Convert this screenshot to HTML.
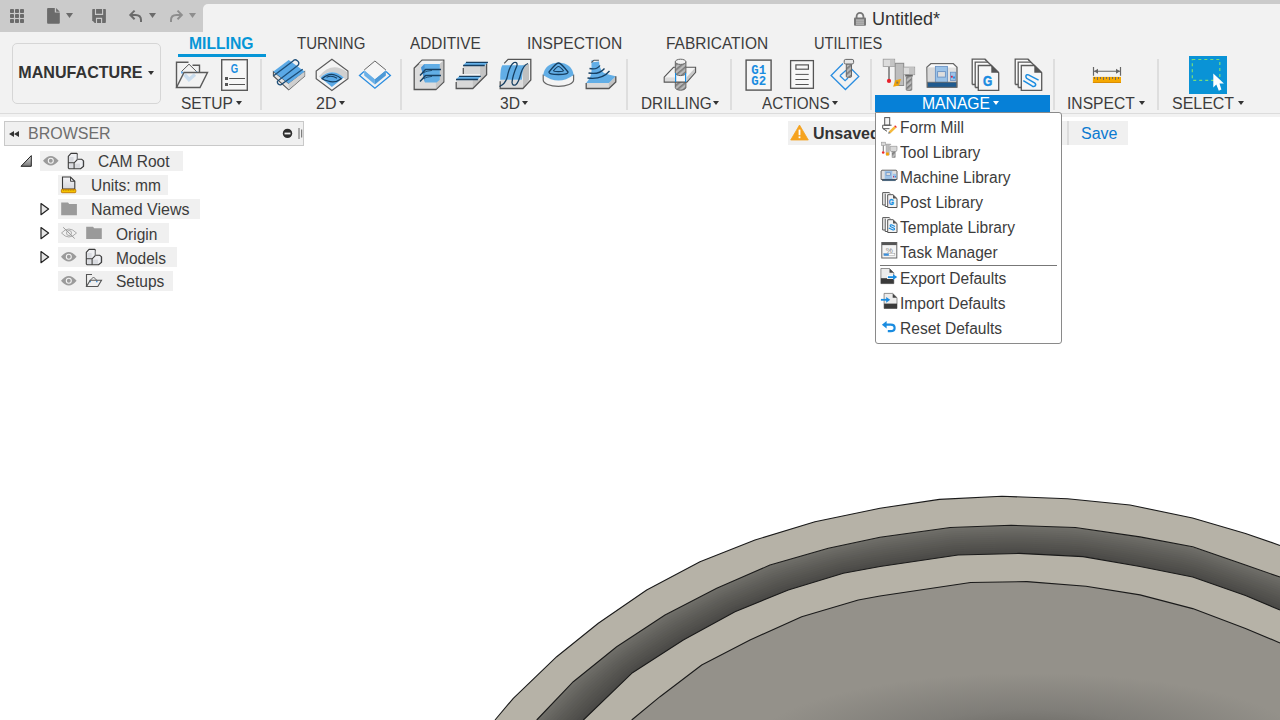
<!DOCTYPE html>
<html><head><meta charset="utf-8">
<style>
*{margin:0;padding:0;box-sizing:border-box}
html,body{width:1280px;height:720px;overflow:hidden;background:#fff;font-family:"Liberation Sans",sans-serif;color:#3c3c3c}
.a{position:absolute}
.t{position:absolute;white-space:nowrap;line-height:1}
svg{position:absolute;overflow:visible}
.tri{position:absolute;width:0;height:0;border-left:3px solid transparent;border-right:3px solid transparent;border-top:4px solid #333}
.sep{position:absolute;top:59px;width:2px;height:51px;background:#dedede}
.lbl{font-size:16px;color:#3c3c3c}
.tab{font-size:16px;color:#3c3c3c}
.row{position:absolute;height:20px;background:#f0f0f0}
.rt{position:absolute;font-size:16.5px;color:#3c3c3c;white-space:nowrap;line-height:1;transform:scaleX(0.94);transform-origin:0 0}
.mi{position:absolute;left:900px;font-size:16px;color:#3c3c3c;white-space:nowrap;line-height:1;transform:scaleX(0.972);transform-origin:0 0}
</style></head><body>

<!-- 3D model -->
<svg style="left:0;top:0" width="1280" height="720">
<defs><radialGradient id="floor" gradientUnits="userSpaceOnUse" cx="0" cy="0" r="1" gradientTransform="translate(1030 748) scale(280 75)"><stop offset="0" stop-color="#5e5c57"/><stop offset="0.5" stop-color="#7f7d78"/><stop offset="1" stop-color="#94918a"/></radialGradient>
<clipPath id="wallclip"><path d="M536.7 720.0 L573.3 681.7 L616.7 646.7 L665.0 615.0 L716.7 588.3 L770.0 565.0 L828.3 548.3 L880.0 537.2 L950.3 527.5 L1011.2 525.3 L1075.3 527.5 L1140.0 536.9 L1192.7 546.7 L1245.5 565.1 L1280.0 577.0 L1280 720 Z"/></clipPath></defs>
<path d="M495.0 720.0 L513.3 698.3 L556.7 656.7 L598.3 623.3 L646.7 590.0 L700.0 561.7 L755.0 540.0 L815.0 521.7 L880.0 508.3 L939.4 499.4 L1001.9 496.2 L1067.5 498.8 L1130.0 505.0 L1192.5 518.0 L1245.5 533.5 L1280.0 545.4 L1280 720 Z" fill="#b6b2a7"/>
<g clip-path="url(#wallclip)"><path d="M430.0 831.7 L446.3 814.6 L462.0 798.1 L477.3 782.1 L492.2 766.5 L506.7 751.4 L520.9 736.5 L534.9 721.9 L548.5 707.6 L562.0 693.5 L575.7 679.8 L590.9 667.5 L605.9 655.4 L621.0 643.9 L636.9 633.4 L652.6 623.1 L668.3 613.3 L684.9 604.7 L701.2 596.3 L717.3 588.0 L733.9 580.8 L750.3 573.6 L766.5 566.5 L783.5 561.1 L800.4 556.3 L817.2 551.5 L834.0 547.1 L850.9 543.4 L867.6 539.9 L884.4 536.6 L901.2 534.3 L918.0 532.0 L934.7 529.7 L951.3 527.5 L968.1 526.9 L984.9 526.3 L1001.6 525.6 L1018.4 525.5 L1035.1 526.1 L1051.9 526.7 L1068.7 527.3 L1085.5 529.0 L1102.1 531.4 L1118.9 533.8 L1135.7 536.3 L1152.6 539.2 L1169.5 542.4 L1186.6 545.6 L1203.3 550.4 L1219.7 556.1 L1236.2 561.9 L1252.9 567.6 L1269.8 573.5 L1287.0 579.4 L1304.5 585.5 L1322.4 591.6 L1340.7 597.9 L1359.5 604.4 L1378.8 611.1 L1400 760 L400 760 Z" fill="#706f69"/><path d="M432.0 832.3 L448.3 815.3 L464.1 798.9 L479.4 783.0 L494.3 767.5 L508.8 752.4 L523.0 737.6 L536.9 723.1 L550.6 708.9 L564.1 694.9 L577.7 681.2 L592.7 669.0 L607.5 656.9 L622.6 645.4 L638.5 635.0 L654.1 624.8 L669.8 615.0 L686.3 606.4 L702.5 598.0 L718.5 589.8 L735.1 582.6 L751.4 575.4 L767.5 568.4 L784.4 563.0 L801.3 558.2 L818.0 553.4 L834.7 548.9 L851.6 545.4 L868.2 541.8 L884.9 538.6 L901.7 536.3 L918.4 534.0 L935.0 531.7 L951.6 529.5 L968.3 528.8 L985.0 528.3 L1001.7 527.7 L1018.3 527.5 L1035.0 528.1 L1051.7 528.7 L1068.5 529.3 L1085.1 530.9 L1101.7 533.4 L1118.4 535.8 L1135.2 538.3 L1151.9 541.2 L1168.8 544.4 L1185.8 547.6 L1202.4 552.3 L1218.8 558.0 L1235.2 563.7 L1251.9 569.5 L1268.7 575.3 L1285.8 581.3 L1303.2 587.4 L1320.9 593.6 L1339.1 599.9 L1357.7 606.5 L1376.9 613.2 L1400 760 L400 760 Z" fill="#6c6b66"/><path d="M434.1 832.9 L450.4 816.0 L466.2 799.7 L481.5 783.8 L496.4 768.4 L510.9 753.4 L525.1 738.7 L539.0 724.4 L552.6 710.2 L566.1 696.3 L579.7 682.7 L594.6 670.4 L609.2 658.3 L624.3 646.9 L640.1 636.6 L655.7 626.4 L671.3 616.6 L687.7 608.1 L703.8 599.7 L719.7 591.5 L736.2 584.3 L752.5 577.3 L768.6 570.3 L785.4 564.9 L802.2 560.0 L818.8 555.2 L835.4 550.8 L852.2 547.3 L868.8 543.8 L885.5 540.6 L902.2 538.3 L918.8 536.0 L935.3 533.7 L951.8 531.5 L968.5 530.8 L985.1 530.3 L1001.7 529.7 L1018.3 529.5 L1034.9 530.1 L1051.5 530.7 L1068.2 531.3 L1084.8 532.9 L1101.4 535.3 L1117.9 537.8 L1134.6 540.3 L1151.3 543.2 L1168.1 546.4 L1185.0 549.6 L1201.6 554.2 L1217.9 559.8 L1234.3 565.5 L1250.8 571.3 L1267.6 577.2 L1284.5 583.2 L1301.8 589.3 L1319.4 595.5 L1337.4 601.9 L1355.9 608.5 L1374.9 615.2 L1400 760 L400 760 Z" fill="#696863"/><path d="M436.1 833.5 L452.5 816.7 L468.3 800.4 L483.6 784.7 L498.5 769.4 L513.0 754.4 L527.2 739.9 L541.0 725.6 L554.7 711.5 L568.2 697.7 L581.7 684.2 L596.4 671.9 L610.9 659.7 L626.0 648.5 L641.7 638.2 L657.2 628.0 L672.8 618.3 L689.1 609.8 L705.1 601.4 L721.0 593.2 L737.4 586.1 L753.6 579.1 L769.7 572.2 L786.4 566.8 L803.1 561.9 L819.6 557.1 L836.2 552.7 L852.9 549.2 L869.5 545.7 L886.0 542.6 L902.6 540.3 L919.2 538.0 L935.6 535.7 L952.1 533.5 L968.7 532.8 L985.2 532.3 L1001.7 531.7 L1018.3 531.5 L1034.8 532.1 L1051.3 532.7 L1067.9 533.4 L1084.5 534.9 L1101.0 537.3 L1117.5 539.8 L1134.1 542.3 L1150.7 545.2 L1167.4 548.4 L1184.3 551.6 L1200.8 556.0 L1217.0 561.7 L1233.3 567.4 L1249.8 573.1 L1266.5 579.0 L1283.3 585.0 L1300.4 591.2 L1317.9 597.5 L1335.8 603.9 L1354.1 610.5 L1373.0 617.3 L1400 760 L400 760 Z" fill="#666560"/><path d="M438.2 834.1 L454.6 817.4 L470.4 801.2 L485.7 785.5 L500.6 770.3 L515.1 755.5 L529.2 741.0 L543.1 726.8 L556.8 712.8 L570.2 699.1 L583.7 685.6 L598.2 673.3 L612.6 661.2 L627.6 650.0 L643.3 639.7 L658.8 629.6 L674.3 620.0 L690.5 611.5 L706.4 603.1 L722.2 594.9 L738.5 587.9 L754.7 580.9 L770.7 574.1 L787.3 568.6 L804.0 563.8 L820.5 559.0 L836.9 554.5 L853.6 551.1 L870.1 547.7 L886.5 544.6 L903.1 542.3 L919.6 540.0 L935.9 537.7 L952.3 535.5 L968.8 534.8 L985.3 534.3 L1001.8 533.7 L1018.2 533.5 L1034.7 534.1 L1051.2 534.8 L1067.7 535.4 L1084.2 536.8 L1100.6 539.3 L1117.0 541.8 L1133.5 544.3 L1150.1 547.2 L1166.7 550.4 L1183.5 553.6 L1200.0 557.9 L1216.1 563.5 L1232.4 569.2 L1248.8 574.9 L1265.4 580.8 L1282.1 586.9 L1299.1 593.1 L1316.4 599.5 L1334.1 605.9 L1352.3 612.5 L1371.0 619.4 L1400 760 L400 760 Z" fill="#63625d"/><path d="M440.3 834.7 L456.6 818.0 L472.5 802.0 L487.8 786.4 L502.6 771.2 L517.1 756.5 L531.3 742.1 L545.2 728.0 L558.8 714.1 L572.2 700.5 L585.7 687.1 L600.1 674.8 L614.3 662.6 L629.3 651.5 L644.9 641.3 L660.3 631.3 L675.8 621.7 L691.9 613.2 L707.7 604.8 L723.4 596.6 L739.7 589.6 L755.8 582.7 L771.8 575.9 L788.3 570.5 L804.9 565.7 L821.3 560.9 L837.6 556.4 L854.2 553.0 L870.7 549.6 L887.1 546.6 L903.6 544.3 L919.9 542.0 L936.3 539.7 L952.6 537.5 L969.0 536.8 L985.4 536.3 L1001.8 535.7 L1018.2 535.5 L1034.6 536.1 L1051.0 536.8 L1067.4 537.4 L1083.9 538.8 L1100.2 541.2 L1116.6 543.8 L1133.0 546.3 L1149.5 549.2 L1166.0 552.4 L1182.7 555.6 L1199.2 559.8 L1215.3 565.4 L1231.4 571.0 L1247.8 576.7 L1264.2 582.7 L1280.8 588.8 L1297.7 595.0 L1314.9 601.4 L1332.5 607.9 L1350.5 614.6 L1369.0 621.4 L1400 760 L400 760 Z" fill="#605f5b"/><path d="M442.3 835.3 L458.7 818.7 L474.5 802.7 L489.9 787.2 L504.7 772.2 L519.2 757.5 L533.4 743.2 L547.2 729.2 L560.9 715.4 L574.3 701.8 L587.7 688.6 L601.9 676.2 L615.9 664.0 L631.0 653.0 L646.5 642.9 L661.8 632.9 L677.2 623.4 L693.2 614.9 L709.0 606.6 L724.6 598.3 L740.9 591.4 L756.9 584.6 L772.8 577.8 L789.3 572.4 L805.8 567.5 L822.1 562.8 L838.3 558.2 L854.9 554.9 L871.3 551.6 L887.6 548.7 L904.0 546.3 L920.3 544.0 L936.6 541.7 L952.8 539.5 L969.2 538.8 L985.5 538.3 L1001.8 537.7 L1018.2 537.5 L1034.5 538.1 L1050.8 538.8 L1067.2 539.5 L1083.6 540.8 L1099.8 543.2 L1116.1 545.8 L1132.4 548.3 L1148.8 551.3 L1165.3 554.4 L1181.9 557.6 L1198.4 561.7 L1214.4 567.3 L1230.5 572.9 L1246.8 578.5 L1263.1 584.5 L1279.6 590.7 L1296.4 597.0 L1313.4 603.4 L1330.9 609.9 L1348.7 616.6 L1367.1 623.5 L1400 760 L400 760 Z" fill="#5d5c58"/><path d="M444.4 835.9 L460.8 819.4 L476.6 803.5 L491.9 788.1 L506.8 773.1 L521.3 758.6 L535.5 744.3 L549.3 730.4 L562.9 716.7 L576.3 703.2 L589.7 690.1 L603.7 677.7 L617.6 665.5 L632.6 654.5 L648.1 644.5 L663.4 634.5 L678.7 625.0 L694.6 616.6 L710.3 608.3 L725.8 600.0 L742.0 593.2 L758.0 586.4 L773.9 579.7 L790.2 574.3 L806.6 569.4 L822.9 564.6 L839.1 560.1 L855.5 556.8 L871.9 553.5 L888.2 550.7 L904.5 548.3 L920.7 546.0 L936.9 543.7 L953.1 541.5 L969.4 540.8 L985.6 540.3 L1001.9 539.7 L1018.1 539.5 L1034.4 540.1 L1050.6 540.8 L1066.9 541.5 L1083.3 542.7 L1099.4 545.2 L1115.6 547.8 L1131.9 550.4 L1148.2 553.3 L1164.6 556.4 L1181.1 559.6 L1197.6 563.6 L1213.5 569.1 L1229.5 574.7 L1245.7 580.4 L1262.0 586.3 L1278.4 592.5 L1295.0 598.9 L1311.9 605.3 L1329.2 611.9 L1346.9 618.6 L1365.1 625.6 L1400 760 L400 760 Z" fill="#5b5a55"/><path d="M446.5 836.5 L462.9 820.1 L478.7 804.3 L494.0 788.9 L508.9 774.1 L523.4 759.6 L537.5 745.4 L551.4 731.6 L565.0 718.0 L578.3 704.6 L591.7 691.5 L605.6 679.1 L619.3 666.9 L634.3 656.1 L649.7 646.0 L664.9 636.1 L680.2 626.7 L696.0 618.3 L711.6 610.0 L727.1 601.8 L743.2 594.9 L759.2 588.2 L774.9 581.6 L791.2 576.1 L807.5 571.3 L823.7 566.5 L839.8 562.0 L856.2 558.7 L872.5 555.5 L888.7 552.7 L905.0 550.3 L921.1 548.0 L937.2 545.7 L953.3 543.5 L969.5 542.7 L985.7 542.3 L1001.9 541.8 L1018.1 541.5 L1034.3 542.1 L1050.4 542.8 L1066.7 543.5 L1082.9 544.7 L1099.0 547.2 L1115.2 549.8 L1131.4 552.4 L1147.6 555.3 L1163.9 558.4 L1180.4 561.6 L1196.8 565.5 L1212.6 571.0 L1228.6 576.6 L1244.7 582.2 L1260.9 588.2 L1277.1 594.4 L1293.6 600.8 L1310.4 607.3 L1327.6 613.9 L1345.1 620.7 L1363.2 627.6 L1400 760 L400 760 Z" fill="#585753"/><path d="M448.5 837.1 L464.9 820.8 L480.8 805.0 L496.1 789.8 L511.0 775.0 L525.5 760.6 L539.6 746.6 L553.4 732.8 L567.0 719.3 L580.4 706.0 L593.7 693.0 L607.4 680.6 L621.0 668.3 L635.9 657.6 L651.3 647.6 L666.5 637.8 L681.7 628.4 L697.4 620.0 L712.9 611.7 L728.3 603.5 L744.4 596.7 L760.3 590.0 L776.0 583.5 L792.2 578.0 L808.4 573.2 L824.5 568.4 L840.5 563.8 L856.9 560.6 L873.1 557.4 L889.3 554.7 L905.5 552.4 L921.5 550.0 L937.5 547.7 L953.6 545.5 L969.7 544.7 L985.8 544.3 L1001.9 543.8 L1018.1 543.5 L1034.2 544.1 L1050.3 544.8 L1066.4 545.6 L1082.6 546.7 L1098.6 549.1 L1114.7 551.7 L1130.8 554.4 L1147.0 557.3 L1163.2 560.4 L1179.6 563.6 L1195.9 567.4 L1211.7 572.8 L1227.6 578.4 L1243.7 584.0 L1259.8 590.0 L1275.9 596.3 L1292.3 602.7 L1308.9 609.2 L1325.9 615.9 L1343.3 622.7 L1361.2 629.7 L1400 760 L400 760 Z" fill="#555450"/><path d="M450.6 837.7 L467.0 821.5 L482.9 805.8 L498.2 790.6 L513.1 775.9 L527.6 761.6 L541.7 747.7 L555.5 734.0 L569.1 720.6 L582.4 707.4 L595.7 694.5 L609.2 682.1 L622.7 669.8 L637.6 659.1 L652.9 649.2 L668.0 639.4 L683.2 630.1 L698.8 621.7 L714.2 613.4 L729.5 605.2 L745.5 598.5 L761.4 591.9 L777.1 585.3 L793.1 579.9 L809.3 575.0 L825.3 570.3 L841.2 565.7 L857.5 562.5 L873.7 559.4 L889.8 556.7 L905.9 554.4 L921.9 552.1 L937.9 549.7 L953.8 547.5 L969.9 546.7 L986.0 546.3 L1002.0 545.8 L1018.0 545.5 L1034.1 546.1 L1050.1 546.9 L1066.2 547.6 L1082.3 548.6 L1098.3 551.1 L1114.2 553.7 L1130.3 556.4 L1146.4 559.3 L1162.5 562.4 L1178.8 565.6 L1195.1 569.3 L1210.9 574.7 L1226.7 580.2 L1242.7 585.8 L1258.7 591.8 L1274.7 598.2 L1290.9 604.6 L1307.4 611.2 L1324.3 617.9 L1341.6 624.7 L1359.2 631.8 L1400 760 L400 760 Z" fill="#53524e"/><path d="M452.7 838.3 L469.1 822.1 L485.0 806.6 L500.3 791.5 L515.2 776.9 L529.6 762.7 L543.8 748.8 L557.6 735.2 L571.1 721.9 L584.4 708.8 L597.7 695.9 L611.1 683.5 L624.4 671.2 L639.3 660.6 L654.5 650.7 L669.5 641.0 L684.7 631.8 L700.2 623.4 L715.5 615.1 L730.7 606.9 L746.7 600.2 L762.5 593.7 L778.1 587.2 L794.1 581.7 L810.2 576.9 L826.1 572.1 L842.0 567.6 L858.2 564.4 L874.3 561.4 L890.4 558.7 L906.4 556.4 L922.3 554.1 L938.2 551.8 L954.1 549.5 L970.1 548.7 L986.1 548.3 L1002.0 547.8 L1018.0 547.5 L1033.9 548.1 L1049.9 548.9 L1065.9 549.6 L1082.0 550.6 L1097.9 553.1 L1113.8 555.7 L1129.7 558.4 L1145.7 561.3 L1161.8 564.4 L1178.0 567.6 L1194.3 571.2 L1210.0 576.6 L1225.7 582.1 L1241.7 587.6 L1257.5 593.7 L1273.4 600.1 L1289.5 606.5 L1305.9 613.1 L1322.7 619.9 L1339.8 626.8 L1357.3 633.8 L1400 760 L400 760 Z" fill="#504f4c"/><path d="M454.7 838.9 L471.2 822.8 L487.0 807.3 L502.4 792.4 L517.2 777.8 L531.7 763.7 L545.8 749.9 L559.6 736.4 L573.2 723.2 L586.5 710.2 L599.7 697.4 L612.9 685.0 L626.0 672.7 L640.9 662.1 L656.1 652.3 L671.1 642.6 L686.2 633.5 L701.6 625.1 L716.8 616.8 L731.9 608.6 L747.9 602.0 L763.6 595.5 L779.2 589.1 L795.1 583.6 L811.1 578.8 L826.9 574.0 L842.7 569.4 L858.9 566.4 L874.9 563.3 L890.9 560.7 L906.9 558.4 L922.7 556.1 L938.5 553.8 L954.3 551.5 L970.2 550.7 L986.2 550.3 L1002.1 549.8 L1018.0 549.4 L1033.8 550.1 L1049.7 550.9 L1065.7 551.6 L1081.7 552.6 L1097.5 555.0 L1113.3 557.7 L1129.2 560.4 L1145.1 563.3 L1161.1 566.4 L1177.3 569.6 L1193.5 573.1 L1209.1 578.4 L1224.8 583.9 L1240.6 589.4 L1256.4 595.5 L1272.2 601.9 L1288.2 608.5 L1304.4 615.1 L1321.0 621.9 L1338.0 628.8 L1355.3 635.9 L1400 760 L400 760 Z" fill="#4d4c49"/><path d="M456.8 839.5 L473.2 823.5 L489.1 808.1 L504.5 793.2 L519.3 778.8 L533.8 764.7 L547.9 751.0 L561.7 737.6 L575.2 724.5 L588.5 711.6 L601.7 698.9 L614.8 686.4 L627.7 674.1 L642.6 663.7 L657.7 653.9 L672.6 644.3 L687.6 635.1 L703.0 626.8 L718.2 618.5 L733.1 610.3 L749.0 603.8 L764.7 597.3 L780.2 591.0 L796.0 585.5 L812.0 580.7 L827.7 575.9 L843.4 571.3 L859.5 568.3 L875.5 565.3 L891.5 562.7 L907.3 560.4 L923.1 558.1 L938.8 555.8 L954.6 553.5 L970.4 552.7 L986.3 552.3 L1002.1 551.8 L1017.9 551.4 L1033.7 552.1 L1049.6 552.9 L1065.4 553.7 L1081.4 554.5 L1097.1 557.0 L1112.8 559.7 L1128.6 562.4 L1144.5 565.3 L1160.4 568.4 L1176.5 571.6 L1192.7 574.9 L1208.2 580.3 L1223.8 585.7 L1239.6 591.3 L1255.3 597.3 L1271.0 603.8 L1286.8 610.4 L1302.9 617.1 L1319.4 623.9 L1336.2 630.8 L1353.4 637.9 L1400 760 L400 760 Z" fill="#4b4a47"/></g>
<path d="M583.3 720.0 L631.7 673.3 L683.3 640.0 L735.0 611.7 L788.3 590.0 L843.3 573.3 L880.0 566.5 L958.0 555.0 L1019.0 553.4 L1083.0 556.6 L1140.0 566.5 L1192.7 577.0 L1245.5 595.5 L1280.0 610.0 L1280 720 Z" fill="#b6b2a7"/>
<path d="M631.7 720.0 L660.0 696.7 L701.7 665.0 L750.0 640.0 L801.7 616.7 L858.3 600.0 L880.0 596.0 L970.6 582.5 L1026.9 581.6 L1086.0 586.2 L1140.0 594.9 L1192.7 608.6 L1245.5 628.4 L1280.0 642.9 L1280 720 Z" fill="url(#floor)"/>
<path d="M495.0 720.0 L513.3 698.3 L556.7 656.7 L598.3 623.3 L646.7 590.0 L700.0 561.7 L755.0 540.0 L815.0 521.7 L880.0 508.3 L939.4 499.4 L1001.9 496.2 L1067.5 498.8 L1130.0 505.0 L1192.5 518.0 L1245.5 533.5 L1280.0 545.4" fill="none" stroke="#1a1a1a" stroke-width="1.1" stroke-linejoin="round"/>
<path d="M536.7 720.0 L573.3 681.7 L616.7 646.7 L665.0 615.0 L716.7 588.3 L770.0 565.0 L828.3 548.3 L880.0 537.2 L950.3 527.5 L1011.2 525.3 L1075.3 527.5 L1140.0 536.9 L1192.7 546.7 L1245.5 565.1 L1280.0 577.0" fill="none" stroke="#1a1a1a" stroke-width="1.1" stroke-linejoin="round"/>
<path d="M583.3 720.0 L631.7 673.3 L683.3 640.0 L735.0 611.7 L788.3 590.0 L843.3 573.3 L880.0 566.5 L958.0 555.0 L1019.0 553.4 L1083.0 556.6 L1140.0 566.5 L1192.7 577.0 L1245.5 595.5 L1280.0 610.0" fill="none" stroke="#1a1a1a" stroke-width="1.1" stroke-linejoin="round"/>
<path d="M631.7 720.0 L660.0 696.7 L701.7 665.0 L750.0 640.0 L801.7 616.7 L858.3 600.0 L880.0 596.0 L970.6 582.5 L1026.9 581.6 L1086.0 586.2 L1140.0 594.9 L1192.7 608.6 L1245.5 628.4 L1280.0 642.9" fill="none" stroke="#1a1a1a" stroke-width="1.1" stroke-linejoin="round"/>
</svg>

<!-- top bar -->
<div class="a" style="left:0;top:0;width:1280px;height:32px;background:#cbcbcb"></div>
<div class="a" style="left:203px;top:4px;width:1077px;height:40px;background:#f2f2f2;border-top-left-radius:5px"></div>
<div class="a" style="left:0;top:32px;width:1280px;height:85px;background:#f2f2f2"></div>
<div class="a" style="left:0;top:113px;width:1280px;height:1px;background:#dcdcdc"></div>

<!-- quick access -->
<svg style="left:0;top:0" width="210" height="32">
  <g fill="#6b6b6b">
    <rect x="10" y="9" width="4" height="4" rx="0.8"/><rect x="15" y="9" width="4" height="4" rx="0.8"/><rect x="20" y="9" width="4" height="4" rx="0.8"/>
    <rect x="10" y="14" width="4" height="4" rx="0.8"/><rect x="15" y="14" width="4" height="4" rx="0.8"/><rect x="20" y="14" width="4" height="4" rx="0.8"/>
    <rect x="10" y="19" width="4" height="4" rx="0.8"/><rect x="15" y="19" width="4" height="4" rx="0.8"/><rect x="20" y="19" width="4" height="4" rx="0.8"/>
    <path d="M47.1 9Q47.1 8.1 48 8.1H54.8V12.5H59.8V22.8Q59.8 23.7 58.9 23.7H48Q47.1 23.7 47.1 22.8Z"/><path d="M56.1 8.1L59.8 11.7H56.1Z"/>
    <path d="M66 13h7l-3.5 5z"/>
    <path d="M92.2 9.8Q92.2 8.9 93.1 8.9H105Q105.9 8.9 105.9 9.8V22Q105.9 22.9 105 22.9H94.7L92.2 20.2Z"/>
    <path d="M149 13h7l-3.5 5z"/>
  </g>
  <path d="M95.5 8.9V14.4H102.6V8.9M96.5 22.9V18.4H101.6V22.9" fill="none" stroke="#cbcbcb" stroke-width="1.1"/>
  <path d="M141 22V20Q141 14.9 135.5 14.9H130.5" stroke="#6b6b6b" stroke-width="2" fill="none"/>
  <path d="M134.6 10.6L130.3 14.9L134.6 19.2" stroke="#6b6b6b" stroke-width="2" fill="none"/>
  <path d="M171 22V20Q171 14.9 176.5 14.9H181.5" stroke="#8e8e8e" stroke-width="2" fill="none"/>
  <path d="M177.5 10.6L181.8 14.9L177.5 19.2" stroke="#8e8e8e" stroke-width="2" fill="none"/>
  <path d="M189 13h7l-3.5 5z" fill="#8e8e8e"/>
</svg>

<!-- title -->
<svg style="left:853px;top:12px" width="14" height="15">
  <path d="M3.6 6.5v-2.3a3.4 3.4 0 0 1 6.8 0v2.3" stroke="#777" stroke-width="1.8" fill="none"/>
  <rect x="1" y="5.6" width="12" height="8.2" rx="1" fill="#777"/>
  <rect x="3" y="7.6" width="8" height="0.9" fill="#e6e6e6"/><rect x="3" y="9.6" width="8" height="0.9" fill="#e6e6e6"/><rect x="3" y="11.6" width="8" height="0.9" fill="#e6e6e6"/>
</svg>
<div class="t" style="left:872px;top:10px;font-size:18px;color:#333">Untitled*</div>

<!-- MANUFACTURE -->
<div class="a" style="left:12px;top:43px;width:149px;height:61px;border:1.5px solid #d6d6d6;border-radius:5px"></div>
<div class="t" style="left:18.3px;top:64px;font-size:16.1px;font-weight:bold;color:#333">MANUFACTURE</div>
<div class="tri" style="left:148px;top:71px"></div>

<!-- tabs -->
<div class="t" style="left:189px;top:36px;font-size:15.7px;font-weight:bold;color:#0696d7">MILLING</div>
<div class="a" style="left:178px;top:54px;width:88px;height:3px;background:#0696d7"></div>
<div class="t tab" style="left:296.7px;top:36px;transform:scaleX(0.9375);transform-origin:0 0">TURNING</div>
<div class="t tab" style="left:409.9px;top:36px;transform:scaleX(0.959);transform-origin:0 0">ADDITIVE</div>
<div class="t tab" style="left:526.9px;top:36px;transform:scaleX(0.974);transform-origin:0 0">INSPECTION</div>
<div class="t tab" style="left:665.8px;top:36px;transform:scaleX(0.968);transform-origin:0 0">FABRICATION</div>
<div class="t tab" style="left:813.9px;top:36px;transform:scaleX(0.914);transform-origin:0 0">UTILITIES</div>

<!-- separators -->
<div class="sep" style="left:260px"></div>
<div class="sep" style="left:400px"></div>
<div class="sep" style="left:626px"></div>
<div class="sep" style="left:730px"></div>
<div class="sep" style="left:870px"></div>
<div class="sep" style="left:1053px"></div>
<div class="sep" style="left:1157px"></div>

<!-- group labels -->
<div class="t lbl" style="left:180.6px;top:96px;transform:scaleX(0.972);transform-origin:0 0">SETUP</div><div class="tri" style="left:235.5px;top:101px"></div>
<div class="t lbl" style="left:316px;top:96px">2D</div><div class="tri" style="left:339px;top:101px"></div>
<div class="t lbl" style="left:499.6px;top:96px;transform:scaleX(0.975);transform-origin:0 0">3D</div><div class="tri" style="left:522px;top:101px"></div>
<div class="t lbl" style="left:641px;top:96px;transform:scaleX(0.958);transform-origin:0 0">DRILLING</div><div class="tri" style="left:713px;top:101px"></div>
<div class="t lbl" style="left:762px;top:96px;transform:scaleX(0.951);transform-origin:0 0">ACTIONS</div><div class="tri" style="left:832px;top:101px"></div>
<div class="a" style="left:875px;top:95px;width:175px;height:17px;background:#0680d7"></div>
<div class="t lbl" style="left:921.9px;top:96px;color:#fff;transform:scaleX(0.981);transform-origin:0 0">MANAGE</div><div class="tri" style="left:993px;top:101px;border-top-color:#fff"></div>
<div class="t lbl" style="left:1067.2px;top:96px;transform:scaleX(0.977);transform-origin:0 0">INSPECT</div><div class="tri" style="left:1139px;top:101px"></div>
<div class="t lbl" style="left:1171.6px;top:96px;transform:scaleX(0.997);transform-origin:0 0">SELECT</div><div class="tri" style="left:1238px;top:101px"></div>

<!-- ICONS -->
<svg style="left:0;top:0" width="1280" height="117">
<defs>
  <pattern id="hatch" patternUnits="userSpaceOnUse" width="4" height="4" patternTransform="rotate(-40)">
    <rect width="4" height="4" fill="#b8b8b8"/><rect width="4" height="1.6" fill="#7a7a7a"/>
  </pattern>
</defs>
<!-- setup folder -->
<g transform="translate(172,56)" fill="none" stroke="#5a5a5a" stroke-width="1.4">
  <path d="M16.5 6.25H4.5V31.5"/>
  <path d="M20.5 9.25H27.5V16.25"/>
  <path d="M9.5 15.5L17 8.2L24.5 15.5" stroke-width="1"/>
  <path d="M12.5 18.5L17 23.5L23 18.5" stroke="#c9dced" stroke-width="3.5"/>
  <path d="M10 15.5V17.5" stroke="#3a8fdc" stroke-width="1.5"/>
  <path d="M24.5 15.5V17" stroke="#3a8fdc" stroke-width="1.5"/>
  <path d="M12 16.5H35.5L28 31.5H4.5Z"/>
</g>
<!-- setup G doc -->
<g transform="translate(216,56)">
  <rect x="5.7" y="3.7" width="25.6" height="30.6" fill="#f6f6f6" stroke="#5a5a5a" stroke-width="1.4"/>
  <text x="14.8" y="17.2" textLength="7.4" lengthAdjust="spacingAndGlyphs" font-family="Liberation Sans" font-weight="bold" font-size="13" fill="#1a8ce0">G</text>
  <rect x="9" y="21" width="3" height="3" fill="#555"/><rect x="9" y="27" width="3" height="3" fill="#555"/>
  <path d="M13.2 22.5H29M13.2 28.5H29" stroke="#555" stroke-width="1"/>
</g>
<!-- 2D adaptive -->
<g transform="translate(270,56)">
  <path d="M3.4 15.6L18.7 27.4L34.6 15.6V20L18.7 33.8L3.4 20Z" fill="#e4e4e4" stroke="#555" stroke-width="1.1"/>
  <path d="M18.7 27.4L34.6 15.6V20L18.7 33.8Z" fill="#cfcfcf"/>
  <path d="M3.4 15.6L18.7 4L34.6 15.6L18.7 27.4Z" fill="#5aa9e6"/>
  <path d="M3.6 19.8L22.7 5.3A3.1 3.1 0 0 1 28 9.3L7.4 25.3A3 3 0 0 0 10.8 28.8L32.7 13.2" fill="none" stroke="#1d4e78" stroke-width="1.3"/>
</g>
<!-- 2D pocket -->
<g transform="translate(312,56)">
  <path d="M19.9 3.2L35.9 15V22.7L19.9 34.6L4.2 22.7V15Z" fill="#f4f4f4" stroke="#5a5a5a" stroke-width="1.2"/>
  <path d="M6.8 20.5Q19.9 4.5 35.3 16.2V22.3L33.5 23.6Q19.9 9.5 8.3 21.6Z" fill="#d0d0d0"/>
  <path d="M8.4 21.6Q19.9 11 31.7 21.6L19.9 30.9Z" fill="#5aa9e6"/>
  <path d="M10 22.7Q17 16.5 23 19Q27 20.5 29.3 22.7Q23 27.5 16 25Q12 24 10 22.7Z" fill="none" stroke="#163f62" stroke-width="1.2"/>
  <path d="M14.5 21.2Q19.5 18.8 25 22.2" fill="none" stroke="#163f62" stroke-width="1.1"/>
</g>
<!-- 2D face -->
<g transform="translate(355,56)">
  <path d="M9 15.6L4.5 19.5L19.9 32.2L35.4 19.5L31 15.6" fill="none" stroke="#2a8de0" stroke-width="1.3"/>
  <path d="M9.2 14L19.9 23V28.5L9.2 19.5Z" fill="#6ab0e8"/>
  <path d="M30.9 14L19.9 23V28.5L30.9 19.5Z" fill="#4d9ad8"/>
  <path d="M19.9 5L30.9 14L19.9 23L9.2 14Z" fill="#f6f6f6"/>
  <path d="M9.2 14L19.9 5L30.9 14" fill="none" stroke="#666" stroke-width="1"/>
</g>
<!-- 3D adaptive -->
<g transform="translate(410,56)">
  <path d="M12.1 4.2H33.8V25.9L25.9 33.5H4.2V12.1Z" fill="#dcdcdc" stroke="#555" stroke-width="1.3"/>
  <path d="M12.1 4.7H33.3L29.8 8H9Z" fill="#f2f2f2"/>
  <path d="M33.3 4.7V25.6L25.9 33H25.9V26.6L29.8 22.8V8Z" fill="#c6c6c6"/>
  <path d="M11.1 11.5L14.5 7.9H29.8V23.8L26.5 26.6H15Z" fill="#62aee6"/>
  <path d="M11.1 11.5L14.5 7.9L15 26.6Z" fill="#4894d4"/>
  <path d="M31 13.5H15.5L10 19.5M31 19.5H15.5L10 25.5" fill="none" stroke="#163f62" stroke-width="1.4" stroke-linejoin="round"/>
  <path d="M12.5 17Q17 14.8 22 14.4M12.5 23Q17 20.8 22 20.4" fill="none" stroke="#163f62" stroke-width="0.8"/>
</g>
<!-- 3D stairs -->
<g transform="translate(452,56)">
  <path d="M11.3 9.5H34.6V18.7L28.2 25V18H11.3Z" fill="#d8d8d8"/>
  <path d="M28.2 9.5H34.6V18.7L28.2 25Z" fill="#c4c4c4"/>
  <path d="M4.2 23.5H28.2L20.8 32.5H4.2Z" fill="#d8d8d8"/>
  <path d="M20.8 23.5H28.2V25L20.8 32.5Z" fill="#c4c4c4"/>
  <path d="M34.6 6V18.7L20.8 32.5H4.2V25.9M11.3 12V18" fill="none" stroke="#555" stroke-width="1.3"/>
  <path d="M14 6.3H35.9L32.7 9.5H11.1Z" fill="#66b2ea"/>
  <path d="M7.1 20.3H28.8L25.9 23.5H4Z" fill="#66b2ea"/>
  <path d="M14 6.3H35.9M11.1 9.5H32.7M7.1 20.3H28.8M4 23.5H25.9" stroke="#163f62" stroke-width="1.3"/>
</g>
<!-- 3D scallop -->
<g transform="translate(496,56)">
  <path d="M12.1 3.4H34.8V24L26.9 32.5H4.2V9.2Z" fill="#f2f2f2"/>
  <path d="M26 9.5Q28 8 33 8V24L26.9 32.5V23.7Z" fill="#c0c0c0"/>
  <path d="M4.2 23.7H26.9V32.5H4.2Z" fill="#dcdcdc"/>
  <path d="M6.3 9.2H30Q26 12 25.9 23.7H4.2Q4.2 12 6.3 9.2Z" fill="#62aee6"/>
  <path d="M8.2 7.4L12.1 3.4H34.8V24L26.9 32.5H4.2V25.3" fill="none" stroke="#555" stroke-width="1.3"/>
  <path d="M3.5 30.5Q9 28 11 22Q13.5 9 18 6.5Q21.5 5.5 21 9.5Q16.5 20 16 26.5Q16.5 30 19.5 29Q22.5 27 25 17Q27.5 9 32 7.5" fill="none" stroke="#163f62" stroke-width="1.3"/>
</g>
<!-- 3D dome -->
<g transform="translate(539,56)">
  <path d="M4.2 19V24A15.2 6.3 0 0 0 34.6 24V19Z" fill="#f4f4f4" stroke="#666" stroke-width="1.2"/>
  <path d="M4.2 19Q6 7.5 19.5 6.6Q33 7.5 34.6 19Q19.5 30 4.2 19Z" fill="#62aee6"/>
  <path d="M19.5 7Q22 7 29 16Q29.5 18.5 19.5 18.5Q9.5 18.5 10 16Q17 7 19.5 7Z" fill="none" stroke="#163f62" stroke-width="1.3"/>
  <path d="M19.5 10.5Q21 10.5 24.5 14.8Q24.5 15.6 19.5 15.6Q14.5 15.6 14.5 14.8Q18 10.5 19.5 10.5Z" fill="none" stroke="#163f62" stroke-width="1.2"/>
</g>
<!-- 3D contour -->
<g transform="translate(582,56)">
  <path d="M4.2 26.9H26.9L33.8 20.3V26L26.9 32.5H4.2Z" fill="#dadada"/>
  <path d="M26.9 26.9L33.8 20.3V26L26.9 32.5Z" fill="#c2c2c2"/>
  <path d="M9.5 4.2H16.9Q17.5 14 22 17Q27 19 33.8 20.3L26.9 26.9H4.2Q9.5 21 9.5 15Z" fill="#62aee6"/>
  <path d="M9.5 6.3L12 4.2H16.9V5.5Q13 6 9.5 6.3Z" fill="#f6f6f6"/>
  <path d="M9.5 6.5L12 4.2H16.9" fill="none" stroke="#555" stroke-width="1.1"/>
  <path d="M4.2 26.9V32.5H26.9L33.8 26V20.3" fill="none" stroke="#555" stroke-width="1.3"/>
  <path d="M7.5 12.5Q15 14 18 9.5M6.5 17Q17 19 22.5 12.5M5.5 22Q20 24 27.5 15" fill="none" stroke="#163f62" stroke-width="1.3"/>
</g>
<!-- drilling -->
<g transform="translate(660,56)">
  <path d="M15.3 25V31.6A5.3 2.6 0 0 0 25.9 31.6V25Z" fill="url(#hatch)" stroke="#666" stroke-width="1"/>
  <path d="M4.2 21.1L13.5 11.3H35.6V16.4L26.9 26.1H4.2Z" fill="#f4f4f4"/>
  <path d="M4.7 21.4H26.6V25.6H4.7Z" fill="#dcdcdc"/>
  <path d="M26.9 21.1L35 12V16.2L26.9 25.6Z" fill="#c8c8c8"/>
  <path d="M15.8 17H25.4V25.6H15.8Z" fill="#f6f6f6"/>
  <path d="M4.2 21.1L13.5 11.3H35.6V16.4L26.9 26.1H4.2Z" fill="none" stroke="#555" stroke-width="1.1"/>
  <path d="M15.3 5.8V17A5.3 2.6 0 0 0 25.9 17V5.8Z" fill="url(#hatch)" stroke="#666" stroke-width="1"/>
  <ellipse cx="20.6" cy="5.8" rx="5.3" ry="2.6" fill="#f2f2f2" stroke="#666" stroke-width="1"/>
  <path d="M15.6 17V26M25.6 17V26" stroke="#1a8ce0" stroke-width="1.2"/>
</g>
<!-- G1 G2 -->
<g transform="translate(742,56)">
  <rect x="4.1" y="4.1" width="25" height="30" fill="#f6f6f6" stroke="#555" stroke-width="1.4"/>
  <text x="9.3" y="18" textLength="14.8" lengthAdjust="spacingAndGlyphs" font-family="Liberation Mono" font-weight="bold" font-size="12.8" fill="#1a8ce0">G1</text>
  <text x="9.3" y="29" textLength="14.8" lengthAdjust="spacingAndGlyphs" font-family="Liberation Mono" font-weight="bold" font-size="12.8" fill="#1a8ce0">G2</text>
</g>
<!-- setup sheet -->
<g transform="translate(786,56)" stroke="#555" fill="none">
  <rect x="4.6" y="4.6" width="22.8" height="27.7" fill="#f8f8f8" stroke-width="1.3"/>
  <rect x="9.9" y="8.9" width="12.5" height="4.3" stroke-width="1.2"/>
  <path d="M9.4 18.4H22.7M9.4 23.5H22.7M9.4 28.5H22.7" stroke-width="1"/>
</g>
<!-- simulate -->
<g transform="translate(786,56)">
  <path d="M57 7.5L45.1 19.5L59.4 33.5L72.8 20.4L65.5 13M53.9 19.8L59.1 24.7L62 22M60 14.3L53.9 19.8" fill="none" stroke="#2a8de0" stroke-width="1.3"/>
  <rect x="60.3" y="7.9" width="5.2" height="13.4" rx="1" fill="url(#hatch)" stroke="#666" stroke-width="1"/>
  <rect x="58.2" y="3.4" width="9.4" height="4.6" rx="1.5" fill="#e6e6e6" stroke="#666" stroke-width="1"/>
</g>
<!-- tool library -->
<g transform="translate(878,54)">
  <rect x="17.2" y="9.3" width="8.5" height="22.2" fill="#bdbdbd" stroke="#8a8a8a" stroke-width="1"/>
  <rect x="10.2" y="12.5" width="1.6" height="13" fill="#7a7a7a"/>
  <circle cx="11" cy="26.9" r="2.1" fill="#e8202a"/>
  <rect x="5.2" y="5.2" width="11.5" height="7.3" fill="#dcdcdc" stroke="#9a9a9a" stroke-width="0.8"/>
  <rect x="12" y="5.6" width="4.3" height="6.5" fill="#c4c4c4"/>
  <path d="M15.1 32.8L17.4 26.2L23 24.9L21 31.5Z" fill="#f0a30a"/>
  <rect x="18.3" y="27.6" width="2" height="2" fill="#8a7a50"/>
  <rect x="25.3" y="13.1" width="11.4" height="7.6" fill="#dcdcdc" stroke="#9a9a9a" stroke-width="0.8"/>
  <rect x="31" y="13.5" width="5.3" height="6.8" fill="#c4c4c4"/>
  <rect x="27.2" y="20.7" width="7.6" height="1.9" fill="#666"/>
  <rect x="28.2" y="22.6" width="5.6" height="13.8" rx="1" fill="url(#hatch)" stroke="#777" stroke-width="0.8"/>
</g>
<!-- machine library -->
<g transform="translate(878,54)">
  <path d="M48.9 13.2L52.9 9.7H75.3L79 13.2V33H49.2Z" fill="#e2e2e2" stroke="#666" stroke-width="1.3"/>
  <path d="M49.6 13.5L53.2 10.4H75L78.3 13.5Z" fill="#fafafa"/>
  <rect x="49.6" y="13.5" width="7.5" height="14.7" fill="#d9d9d9"/>
  <rect x="57.4" y="12.4" width="12" height="16" fill="#9cc3e8" stroke="#6a92c4" stroke-width="0.9"/>
  <rect x="59.6" y="17.6" width="7.8" height="5.5" fill="#dedede" stroke="#6a92c4" stroke-width="0.9"/>
  <rect x="72.4" y="18.2" width="5.3" height="8.2" fill="#9cc3e8" stroke="#6a92c4" stroke-width="0.8"/>
  <rect x="72.9" y="21.8" width="1.8" height="1.8" fill="#d0204a"/>
  <rect x="75" y="22.5" width="2" height="2" fill="#2a8de0"/>
  <rect x="49.6" y="28.2" width="29" height="5" fill="#1f5a8f" stroke="#666" stroke-width="0.8"/>
</g>
<!-- post library -->
<g transform="translate(966,54)" stroke="#5a5a5a" stroke-width="1.3">
  <path d="M6.2 30.5V5.2H19L20 6.2" fill="#fafafa"/>
  <path d="M9.2 33.5V8.2H22" fill="#fafafa"/>
  <path d="M19 5.2L32.7 18.7" fill="none"/>
  <path d="M12.3 36.4V11.5H25.3L32.7 18.7V36.4Z" fill="#f6f6f6"/>
  <path d="M25.3 11.5V18.7H32.7Z" fill="#555" stroke="none"/>
  <path d="M6.2 30.5H9.2M9.2 33.5H12.3" fill="none"/>
  <text x="16.9" y="32.2" textLength="9.3" lengthAdjust="spacingAndGlyphs" font-family="Liberation Sans" font-weight="bold" font-size="15.2" fill="#1a8ce0" stroke="#1a8ce0" stroke-width="0.5">G</text>
</g>
<!-- template library -->
<g transform="translate(1009,54)" stroke="#5a5a5a" stroke-width="1.3">
  <path d="M6.2 30.5V5.2H19L20 6.2" fill="#fafafa"/>
  <path d="M9.2 33.5V8.2H22" fill="#fafafa"/>
  <path d="M19 5.2L32.7 18.7" fill="none"/>
  <path d="M12.3 36.4V11.5H25.3L32.7 18.7V36.4Z" fill="#f6f6f6"/>
  <path d="M25.3 11.5V18.7H32.7Z" fill="#555" stroke="none"/>
  <path d="M6.2 30.5H9.2M9.2 33.5H12.3" fill="none"/>
  <path d="M29.6 26.1L19.5 20.9Q16.8 20 16.9 22.8Q17.2 24.4 19 25.1L25.5 28.8Q27.4 30.4 26.2 31.9Q24.9 32.9 23.4 32.2L14.3 26.6" fill="none" stroke="#1a8ce0" stroke-width="1.5"/>
</g>
<!-- measure -->
<g transform="translate(1086,60)">
  <path d="M7.5 6.9V15.8M34.5 6.9V15.8M8 11.25H34" stroke="#666" stroke-width="1.2"/>
  <path d="M8 11.25L12 8.7V13.8Z M34 11.25L30 8.7V13.8Z" fill="#666"/>
  <rect x="6.9" y="16.9" width="28.1" height="6" fill="#f5a800"/>
  <rect x="6.9" y="22" width="28.1" height="0.9" fill="#d98a00"/>
  <path d="M8.5 17V19M11.5 17V20M14.5 17V19M17.5 17V20M20.5 17V19M23.5 17V20M26.5 17V19M29.5 17V20M32.5 17V19" stroke="#666" stroke-width="0.9"/>
</g>
<!-- select -->
<g transform="translate(1184,52)">
  <rect x="5" y="4" width="38" height="38" fill="#0a93d6"/>
  <rect x="8.3" y="7.5" width="27.5" height="20.9" fill="none" stroke="#78dd7c" stroke-width="1.2" stroke-dasharray="3 3"/>
  <path d="M29.3 21.4V35.5L32.3 32.6L34.8 38.7L37.4 37.4L35.5 31.6H39.9Z" fill="#fff"/>
</g>
</svg>

<!-- browser -->
<div class="a" style="left:4px;top:121px;width:300px;height:25px;background:#f0f0f0;border:1px solid #c9c9c9"></div>
<div class="t" style="left:28px;top:126px;font-size:16px;color:#6e6e6e">BROWSER</div>
<div class="row" style="left:40px;top:151px;width:143px"></div>
<div class="row" style="left:58px;top:175px;width:110px"></div>
<div class="row" style="left:58px;top:199px;width:142px"></div>
<div class="row" style="left:58px;top:223px;width:111px"></div>
<div class="row" style="left:58px;top:247px;width:119px"></div>
<div class="row" style="left:58px;top:271px;width:115px"></div>
<div class="rt" style="left:98px;top:153px">CAM Root</div>
<div class="rt" style="left:91px;top:177px">Units: mm</div>
<div class="rt" style="left:91px;top:201px;transform:scaleX(0.97)">Named Views</div>
<div class="rt" style="left:116px;top:226px">Origin</div>
<div class="rt" style="left:116px;top:250px">Models</div>
<div class="rt" style="left:116px;top:273px">Setups</div>
<svg style="left:0;top:117px" width="310" height="180">
<defs>
  <linearGradient id="tg" x1="0" y1="0" x2="0" y2="1"><stop offset="0" stop-color="#e0e0e0"/><stop offset="1" stop-color="#777"/></linearGradient>
  <linearGradient id="cg" x1="0" y1="0" x2="0" y2="1"><stop offset="0" stop-color="#f4f4f6"/><stop offset="1" stop-color="#d6d8de"/></linearGradient>
</defs>
<g transform="translate(0,-117)">
  <!-- header icons -->
  <path d="M9 134L14 131V137Z M14 134L19 131V137Z" fill="#333"/>
  <circle cx="287.5" cy="133.4" r="4.7" fill="#2e2e2e"/>
  <rect x="284.5" y="132.6" width="6" height="1.8" fill="#f0f0f0"/>
  <path d="M299 128V139M301.7 129.5V137.5" stroke="#555" stroke-width="0.9"/>
  <!-- CAM root -->
  <path d="M21 166.3L31.3 155.6V166.3Z" fill="url(#tg)" stroke="#222" stroke-width="1"/>
  <g transform="translate(43,156)">
    <path d="M0 4.8Q7.8 -4.6 15.6 4.8Q7.8 14.2 0 4.8Z" fill="#9b9b9b"/>
    <circle cx="7.8" cy="4.8" r="2.5" fill="#9b9b9b" stroke="#f4f4f4" stroke-width="1.1"/>
  </g>
  <g transform="translate(68,153)">
    <path d="M0.3 3.4L3 0.4H8.7L9.3 1V6.3H13.8L15.6 7.9V13.3L12.5 15.7H1L0.3 14.9Z" fill="#eeeff2" stroke="#3a3a3a" stroke-width="1.1" stroke-linejoin="round"/>
    <rect x="1.3" y="4" width="4.3" height="5" fill="#d9dbe0"/><rect x="1.3" y="10.6" width="4.3" height="4.4" fill="#d9dbe0"/><rect x="7" y="10.6" width="5" height="4.4" fill="#d9dbe0"/>
    <path d="M8.9 1.5V6.5M14.5 8V13" stroke="#c9ccd2" stroke-width="1"/>
    <path d="M0.3 9.8H6.1V15.7M6.1 9.8L9.3 6.6" fill="none" stroke="#3a3a3a" stroke-width="1.1"/>
  </g>
  <!-- Units -->
  <g transform="translate(61,176)">
    <path d="M1.5 1H9.5L13.8 5.3V13H1.5Z" fill="url(#cg)" stroke="#3a3a3a" stroke-width="1.1"/>
    <path d="M9.5 1V5.3H13.8" fill="none" stroke="#3a3a3a" stroke-width="0.9"/>
    <rect x="0.4" y="13.3" width="14.4" height="3.4" rx="0.8" fill="#f5c400" stroke="#c27800" stroke-width="0.9"/>
    <path d="M2.5 13.6V14.8M4.2 13.6V14.8M5.9 13.6V14.8M7.6 13.6V14.8M9.3 13.6V14.8M11 13.6V14.8M12.7 13.6V14.8" stroke="#a87000" stroke-width="0.7"/>
  </g>
  <!-- Named views -->
  <path d="M41 203.5L48.6 209.1L41 214.7Z" fill="#e6e6e6" stroke="#222" stroke-width="1.2" stroke-linejoin="round"/>
  <path d="M61.2 202.4H68L69.2 204H76.9V215.2H61.2Z" fill="#9a9a9a"/>
  
  <!-- Origin -->
  <path d="M41 227.5L48.6 233.1L41 238.7Z" fill="#e6e6e6" stroke="#222" stroke-width="1.2" stroke-linejoin="round"/>
  <g transform="translate(61,228)">
    <path d="M0.5 5Q7.8 -3 15.5 5Q7.8 13 0.5 5Z" fill="none" stroke="#aaa" stroke-width="1"/>
    <circle cx="8" cy="5" r="2.5" fill="none" stroke="#aaa" stroke-width="1"/>
    <path d="M2.2 -0.7L13.7 10.5" stroke="#999" stroke-width="1"/>
  </g>
  <path d="M86.2 226.7H93L94.2 228.3H101.8V239.1H86.2Z" fill="#9a9a9a"/>
  
  <!-- Models -->
  <path d="M41 251.5L48.6 257.1L41 262.7Z" fill="#e6e6e6" stroke="#222" stroke-width="1.2" stroke-linejoin="round"/>
  <g transform="translate(61,252)">
    <path d="M0 4.8Q7.8 -4.6 15.6 4.8Q7.8 14.2 0 4.8Z" fill="#9b9b9b"/>
    <circle cx="7.8" cy="4.8" r="2.5" fill="#9b9b9b" stroke="#f4f4f4" stroke-width="1.1"/>
  </g>
  <g transform="translate(86,249)">
    <path d="M0.3 3.4L3 0.4H8.7L9.3 1V6.3H13.8L15.6 7.9V13.3L12.5 15.7H1L0.3 14.9Z" fill="#eeeff2" stroke="#3a3a3a" stroke-width="1.1" stroke-linejoin="round"/>
    <rect x="1.3" y="4" width="4.3" height="5" fill="#d9dbe0"/><rect x="1.3" y="10.6" width="4.3" height="4.4" fill="#d9dbe0"/><rect x="7" y="10.6" width="5" height="4.4" fill="#d9dbe0"/>
    <path d="M8.9 1.5V6.5M14.5 8V13" stroke="#c9ccd2" stroke-width="1"/>
    <path d="M0.3 9.8H6.1V15.7M6.1 9.8L9.3 6.6" fill="none" stroke="#3a3a3a" stroke-width="1.1"/>
  </g>
  <!-- Setups -->
  <g transform="translate(61,276)">
    <path d="M0 4.8Q7.8 -4.6 15.6 4.8Q7.8 14.2 0 4.8Z" fill="#9b9b9b"/>
    <circle cx="7.8" cy="4.8" r="2.5" fill="#9b9b9b" stroke="#f4f4f4" stroke-width="1.1"/>
  </g>
  <g transform="translate(86,274)" fill="none" stroke="#555" stroke-width="1.1">
    <path d="M6 0.5H0.5V12.5"/>
    <path d="M4 6.5L7.5 3L11 6.5" stroke-width="0.9"/>
    <path d="M4.2 6.8V8.2M10.8 6.8V8.2" stroke="#3a8fdc" stroke-width="1.4"/>
    <path d="M4.2 6.2H15.5L11.8 12.5H0.5Z"/>
  </g>
</g>
</svg>

<!-- notification -->
<div class="a" style="left:788px;top:121px;width:340px;height:24px;background:#f0f0f0"></div>
<svg style="left:788px;top:121px" width="24" height="24"><path d="M11.5 4L20.3 19H2.7Z" fill="#f5a21e" stroke="#f5a21e" stroke-width="0.8" stroke-linejoin="round"/><rect x="10.6" y="8.6" width="1.8" height="5.6" fill="#fff"/><rect x="10.6" y="15.4" width="1.8" height="1.8" fill="#fff"/></svg>
<div class="t" style="left:813px;top:126px;font-size:16px;font-weight:bold;color:#333">Unsaved</div>
<div class="a" style="left:1067px;top:121px;width:2px;height:24px;background:#dcdcdc"></div>
<div class="t" style="left:1081px;top:126px;font-size:16px;color:#0b7ad0">Save</div>

<!-- menu -->
<div class="a" style="left:875px;top:112px;width:187px;height:232px;background:#fff;border:1px solid #8a8a8a;border-radius:0 3px 3px 3px"></div>
<div class="a" style="left:880px;top:265px;width:177px;height:1px;background:#777"></div>
<svg style="left:870px;top:110px" width="40" height="235">
<g transform="translate(-870,-110)">
  <!-- form mill -->
  <g transform="translate(878,114)">
    <rect x="6.7" y="3.6" width="5" height="7.6" fill="#f4f4f4" stroke="#555" stroke-width="1"/>
    <path d="M4.7 11.2H13.6M4.7 11.2V14.4L9 17.3M5 14.7H11.5" fill="none" stroke="#555" stroke-width="1"/>
    <path d="M10.8 17.4L16.2 12.2L18 14L12.6 19.2Z" fill="#f5b93a"/>
    <path d="M16.2 12.2L17.1 11.3L18.9 13.1L18 14Z" fill="#ee2a2a"/>
    <path d="M10.8 17.4L10.2 19.8L12.6 19.2Z" fill="#666"/>
  </g>
  <!-- tool library small -->
  <g transform="translate(878,139)">
    <rect x="3.4" y="3.2" width="4.2" height="3.2" fill="#d8d8d8" stroke="#999" stroke-width="0.6"/>
    <rect x="4.8" y="6.6" width="0.9" height="6" fill="#666"/>
    <circle cx="5.2" cy="13.5" r="1.3" fill="#ee2a2a"/>
    <path d="M8.1 5.1H12.8V5.8H11.3V16H8.1Z" fill="#bdbdbd" stroke="#999" stroke-width="0.5"/>
    <rect x="8.1" y="13.5" width="2.7" height="3" fill="#f5a000"/>
    <path d="M12.1 7.3H19V10.6Q19 12.7 17.2 12.7H13.9Q12.1 12.7 12.1 10.6Z" fill="#d8d8d8" stroke="#888" stroke-width="0.6"/>
    <rect x="14" y="12.7" width="3.2" height="5.8" fill="url(#hatch)" stroke="#888" stroke-width="0.5"/>
  </g>
  <!-- machine small -->
  <g transform="translate(878,164)">
    <path d="M3.1 7L3.9 6.2H18.2L19 7V15.5H3.1Z" fill="#e0e0e0" stroke="#555" stroke-width="0.9"/>
    <rect x="6.7" y="6.9" width="7.6" height="8" fill="#9cc3e8"/>
    <rect x="8.1" y="8.7" width="4.4" height="2.9" fill="#dcdcdc" stroke="#6a92c4" stroke-width="0.7"/>
    <rect x="15" y="9.8" width="3.2" height="4" fill="#9cc3e8"/>
    <rect x="15" y="12.1" width="1.2" height="1.2" fill="#c8205a"/>
    <rect x="16.9" y="12.1" width="1.2" height="1.2" fill="#2a8de0"/>
    <rect x="4.5" y="15.2" width="13" height="1.6" fill="#1f5a8f" stroke="#555" stroke-width="0.5"/>
  </g>
  <!-- post small -->
  <g transform="translate(878,189)" stroke="#555" stroke-width="1">
    <path d="M4.7 16V3.6H11.2L12.5 4.9" fill="#fafafa"/>
    <path d="M7.2 17.5V4.6" fill="none"/>
    <path d="M9.7 18.5V5.7H15L19 9.6V18.5Z" fill="#f4f4f4"/>
    <path d="M15 5.7V9.6H19Z" fill="#555" stroke="none"/>
    <path d="M4.7 16H7.2M7.2 17.5H9.7" fill="none"/>
    <text x="10.8" y="16.4" textLength="5.2" lengthAdjust="spacingAndGlyphs" font-family="Liberation Sans" font-weight="bold" font-size="9" fill="#1a8ce0" stroke="#1a8ce0" stroke-width="0.3">G</text>
  </g>
  <!-- template small -->
  <g transform="translate(878,214)" stroke="#555" stroke-width="1">
    <path d="M4.7 16V3.6H11.2L12.5 4.9" fill="#fafafa"/>
    <path d="M7.2 17.5V4.6" fill="none"/>
    <path d="M9.7 18.5V5.7H15L19 9.6V18.5Z" fill="#f4f4f4"/>
    <path d="M15 5.7V9.6H19Z" fill="#555" stroke="none"/>
    <path d="M4.7 16H7.2M7.2 17.5H9.7" fill="none"/>
    <path d="M17 12.5L13.5 10.8Q12 10.5 12.2 11.8Q12.4 12.5 13.5 13L16 14.2Q17 15 16 15.8Q15.3 16.2 14.5 15.8L10.8 14" fill="none" stroke="#1a8ce0" stroke-width="1.2"/>
  </g>
  <!-- task manager -->
  <g transform="translate(878,242)">
    <rect x="3.8" y="0.5" width="15" height="15.5" fill="#f4f4f4" stroke="#666" stroke-width="1"/>
    <rect x="3.8" y="0.5" width="15" height="2.6" fill="#555"/>
    <text x="11.3" y="10.5" text-anchor="middle" font-family="Liberation Sans" font-size="8" fill="#888">%</text>
    <rect x="5.8" y="11.5" width="11" height="2.2" fill="#fff" stroke="#999" stroke-width="0.5"/>
    <rect x="5.8" y="11.5" width="5" height="2.2" fill="#3a8fdc"/>
  </g>
  <!-- export/import/reset -->
  <g transform="translate(876,262)">
    <path d="M4.9 6.5H13.5L17.8 10.8V21.6H4.9Z" fill="#ececec" stroke="#666" stroke-width="0.7"/>
    <path d="M13.5 6.5V10.8H17.8Z" fill="#444"/>
    <path d="M4.9 16.2H17.8V21.6H4.9Z" fill="#3a3a3a"/>
    <path d="M11 15.1H18.5" stroke="#fff" stroke-width="3.6"/>
    <path d="M11.9 15.1H18" stroke="#1a8ce0" stroke-width="1.8"/>
    <path d="M17 12.2L21.2 15.1L17 18Z" fill="#1a8ce0"/>
    <path d="M8.1 31.4H16.7L21 35.7V46.5H8.1Z" fill="#ececec" stroke="#666" stroke-width="0.7"/>
    <path d="M16.7 31.4V35.7H21Z" fill="#444"/>
    <path d="M8.1 41.6H21V46.5H8.1Z" fill="#3a3a3a"/>
    <path d="M4.9 37.8H11" stroke="#1a8ce0" stroke-width="1.8"/>
    <path d="M10.2 34.9L14.2 37.8L10.2 40.7Z" fill="#1a8ce0"/>
    <path d="M5.9 62.7L10.6 58.9V66.5Z" fill="#1a8ce0"/>
    <path d="M9.5 62.7H14.8Q18.6 62.7 18.6 66Q18.6 69.2 14.8 69.2H11.8" fill="none" stroke="#1a8ce0" stroke-width="2.2"/>
  </g>
</g>
</svg>
<div class="mi" style="top:120px">Form Mill</div>
<div class="mi" style="top:145px">Tool Library</div>
<div class="mi" style="top:170px">Machine Library</div>
<div class="mi" style="top:195px">Post Library</div>
<div class="mi" style="top:220px">Template Library</div>
<div class="mi" style="top:245px">Task Manager</div>
<div class="mi" style="top:271px">Export Defaults</div>
<div class="mi" style="top:296px">Import Defaults</div>
<div class="mi" style="top:321px">Reset Defaults</div>

</body></html>
